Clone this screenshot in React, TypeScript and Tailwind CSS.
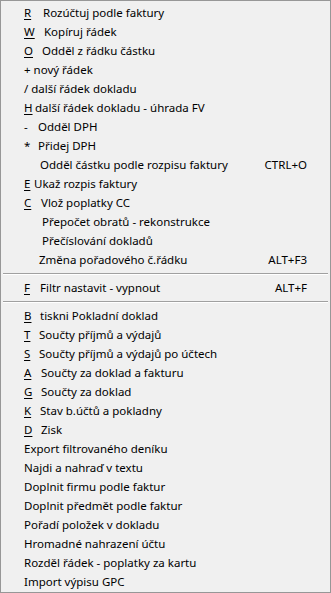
type Item =
  | { sep: true }
  | { sep?: false; key?: string; plain?: boolean; pad?: string; label: string; shortcut?: string };

// pad = width of the accelerator box, so the label lands where the reference has it
const items: Item[] = [
  { key: 'R', pad: 'w-[19px]', label: 'Rozúčtuj podle faktury' },
  { key: 'W', pad: 'w-[20px]', label: 'Kopíruj řádek' },
  { key: 'O', pad: 'w-[18px]', label: 'Odděl z řádku částku' },
  { label: '+ nový řádek' },
  { label: '/ další řádek dokladu' },
  { key: 'H', pad: 'w-[11px]', label: 'další řádek dokladu - úhrada FV' },
  { key: '-', plain: true, pad: 'w-[14px]', label: 'Odděl DPH' },
  { key: '*', plain: true, pad: 'w-[14px]', label: 'Přidej DPH' },
  { pad: 'w-[16px]', label: 'Odděl částku podle rozpisu faktury', shortcut: 'CTRL+O' },
  { key: 'E', pad: 'w-[10px]', label: 'Ukaž rozpis faktury' },
  { key: 'C', pad: 'w-[17px]', label: 'Vlož poplatky CC' },
  { pad: 'w-[18px]', label: 'Přepočet obratů - rekonstrukce' },
  { pad: 'w-[18px]', label: 'Přečíslování dokladů' },
  { pad: 'w-[15px]', label: 'Změna pořadového č.řádku', shortcut: 'ALT+F3' },
  { sep: true },
  { key: 'F', pad: 'w-[16px]', label: 'Filtr nastavit - vypnout', shortcut: 'ALT+F' },
  { sep: true },
  { key: 'B', pad: 'w-[16px]', label: 'tiskni Pokladní doklad' },
  { key: 'T', pad: 'w-[15px]', label: 'Součty příjmů a výdajů' },
  { key: 'S', pad: 'w-[15px]', label: 'Součty příjmů a výdajů po účtech' },
  { key: 'A', pad: 'w-[17px]', label: 'Součty za doklad a fakturu' },
  { key: 'G', pad: 'w-[17px]', label: 'Součty za doklad' },
  { key: 'K', pad: 'w-[16px]', label: 'Stav b.účtů a pokladny' },
  { key: 'D', pad: 'w-[17px]', label: 'Zisk' },
  { label: 'Export filtrovaného deníku' },
  { label: 'Najdi a nahraď v textu' },
  { label: 'Doplnit firmu podle faktur' },
  { label: 'Doplnit předmět podle faktur' },
  { label: 'Pořadí položek v dokladu' },
  { label: 'Hromadné nahrazení účtu' },
  { label: 'Rozděl řádek - poplatky za kartu' },
  { label: 'Import výpisu GPC' },
];

export default function App() {
  return (
    <div className="w-[331px] h-[593px] bg-[#f0f0f0] border border-[#979797] py-[2px] overflow-hidden text-[11.5px] text-black font-['Noto_Sans',sans-serif] select-none">
      {items.map((it, i) =>
        it.sep ? (
          <div key={i} className="h-[9px] flex flex-col justify-center px-[2px]">
            <div className="border-t border-[#a0a0a0] border-b border-b-white" />
          </div>
        ) : (
          <div key={i} className="h-[19px] flex items-center pl-[23px] pr-[23px] whitespace-pre leading-none">
            {it.pad && (
              <span className={`${it.pad} shrink-0`}>
                {it.key && (
                  <span className={it.plain ? '' : 'underline underline-offset-2'}>{it.key}</span>
                )}
              </span>
            )}
            <span className="flex-1">{it.label}</span>
            {it.shortcut && <span>{it.shortcut}</span>}
          </div>
        )
      )}
    </div>
  );
}
